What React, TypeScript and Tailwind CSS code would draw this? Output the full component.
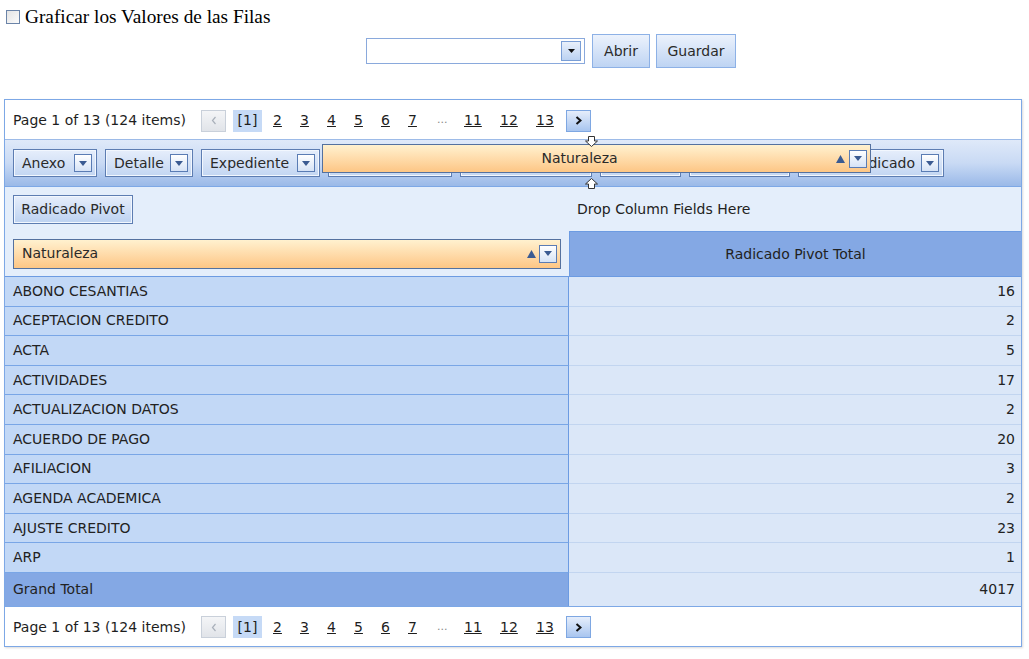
import React from "react";

const FONT = { fontFamily: '"DejaVu Sans", Verdana, sans-serif' };

function DropSq({ size = 18 }: { size?: number }) {
  return (
    <div
      className="flex items-center justify-center border border-[#5a7cb4] bg-gradient-to-b from-white to-[#d6e3f6] shrink-0"
      style={{ width: size, height: size }}
    >
      <svg width="8" height="5" viewBox="0 0 8 5">
        <polygon points="0,0 8,0 4,5" fill="#3b5b92" />
      </svg>
    </div>
  );
}

function SortUp() {
  return (
    <svg width="9" height="8" viewBox="0 0 9 8" className="shrink-0">
      <polygon points="4.5,0 9,8 0,8" fill="#3b5b92" />
    </svg>
  );
}

function FieldBtn({ label, w, hideText }: { label: string; w: number; hideText?: boolean }) {
  return (
    <div
      className="h-[28px] flex items-center justify-between pl-[8px] pr-[4px] border border-[#5d7db2] bg-gradient-to-b from-[#e6eefb] to-[#c3d6f2] shadow-[inset_0_0_0_1px_#f2f7fe] shrink-0"
      style={{ width: w }}
    >
      <span className={"text-[14px] text-[#2a2a2a] whitespace-nowrap " + (hideText ? "opacity-0" : "")}>{label}</span>
      <DropSq />
    </div>
  );
}

function Pager() {
  const nums = ["2", "3", "4", "5", "6", "7"];
  return (
    <div className="h-[39px] bg-white flex items-center pl-[8px] pt-[2px] text-[14px] text-[#1e1e1e]">
      <span className="whitespace-nowrap w-[188px] shrink-0">Page 1 of 13 (124 items)</span>
      <div className="w-[25px] h-[22px] border border-[#c9d0da] bg-gradient-to-b from-[#f4f5f7] to-[#e1e4e9] flex items-center justify-center shrink-0">
        <svg width="6" height="9" viewBox="0 0 6 9">
          <polyline points="4.5,1 1.5,4.5 4.5,8" fill="none" stroke="#a9b0ba" strokeWidth="1.2" />
        </svg>
      </div>
      <div className="ml-[7px] w-[29px] h-[22px] bg-[#c6daf6] flex items-center justify-center shrink-0">[1]</div>
      <div className="flex items-center ml-[11px]">
        {nums.map((n) => (
          <span key={n} className="w-[27px] shrink-0">
            <span className="underline">{n}</span>
          </span>
        ))}
      </div>
      <span className="ml-[2px] w-[27px] shrink-0 text-[#888] text-[11px]">...</span>
      <span className="w-[36px] shrink-0">
        <span className="underline">11</span>
      </span>
      <span className="w-[36px] shrink-0">
        <span className="underline">12</span>
      </span>
      <span className="w-[30px] shrink-0">
        <span className="underline">13</span>
      </span>
      <div className="w-[25px] h-[22px] border border-[#7ea7e2] bg-gradient-to-b from-[#e6eefb] to-[#a8c5ef] flex items-center justify-center shrink-0">
        <svg width="7" height="9" viewBox="0 0 7 9">
          <polyline points="1.5,1 5.5,4.5 1.5,8" fill="none" stroke="#111" strokeWidth="2" />
        </svg>
      </div>
    </div>
  );
}

const rows: [string, number][] = [
  ["ABONO CESANTIAS", 16],
  ["ACEPTACION CREDITO", 2],
  ["ACTA", 5],
  ["ACTIVIDADES", 17],
  ["ACTUALIZACION DATOS", 2],
  ["ACUERDO DE PAGO", 20],
  ["AFILIACION", 3],
  ["AGENDA ACADEMICA", 2],
  ["AJUSTE CREDITO", 23],
  ["ARP", 1],
];

export default function App() {
  return (
    <div className="w-[1029px] h-[659px] bg-white relative overflow-hidden" style={FONT}>
      {/* checkbox row */}
      <div className="h-[34px] flex items-center pl-[6px] pb-[1px]">
        <div className="w-[14px] h-[14px] border border-[#6b84a8] bg-gradient-to-br from-[#e4e4e4] to-[#fbfbfb]" />
        <span
          className="ml-[5px] text-[19.3px] leading-[20px] text-black"
          style={{ fontFamily: '"Liberation Serif", "Times New Roman", serif' }}
        >
          Graficar los Valores de las Filas
        </span>
      </div>

      {/* controls row */}
      <div className="h-[34px] flex items-center pl-[366px]">
        <div className="w-[219px] h-[26px] border border-[#8aa9dc] bg-white flex items-center justify-end pr-[3px]">
          <div className="w-[20px] h-[20px] border border-[#7a9ed6] bg-gradient-to-b from-[#e9f0fb] to-[#bcd2f2] flex items-center justify-center">
            <svg width="7" height="4" viewBox="0 0 7 4">
              <polygon points="0,0 7,0 3.5,4" fill="#111" />
            </svg>
          </div>
        </div>
        <div className="ml-[7px] w-[58px] h-[34px] border border-[#8db1e6] bg-gradient-to-b from-[#ecf2fc] to-[#bed4f3] flex items-center justify-center text-[14px] text-[#2a2a2a]">
          Abrir
        </div>
        <div className="ml-[6px] w-[80px] h-[34px] border border-[#8db1e6] bg-gradient-to-b from-[#ecf2fc] to-[#bed4f3] flex items-center justify-center text-[14px] text-[#2a2a2a]">
          Guardar
        </div>
      </div>

      {/* grid */}
      <div className="mt-[31px] ml-[4px] w-[1018px] border border-[#7da8e6] shadow-[1px_1px_2px_rgba(0,0,0,0.15)]">
        <Pager />

        {/* filter header zone */}
        <div className="relative h-[47px] border-t border-[#9dbbe8] bg-gradient-to-b from-[#dfe9f9] via-[#c9daf4] to-[#9ab9e8] flex items-center pl-[8px] gap-[8px]">
          <FieldBtn label="Anexo" w={84} />
          <FieldBtn label="Detalle" w={88} />
          <FieldBtn label="Expediente" w={119} />
          <FieldBtn label="Dependencia" w={124} hideText />
          <FieldBtn label="Estado" w={132} hideText />
          <FieldBtn label="Folios" w={81} hideText />
          <FieldBtn label="Fecha" w={101} hideText />
          <div className="h-[28px] w-[146px] flex items-center justify-end pr-[4px] border border-[#5d7db2] bg-gradient-to-b from-[#e6eefb] to-[#c3d6f2] shadow-[inset_0_0_0_1px_#f2f7fe] shrink-0">
            <span className="text-[14px] text-[#2a2a2a] whitespace-nowrap">Radicado</span>
            <div className="ml-[6px]">
              <DropSq />
            </div>
          </div>

          {/* dragged field overlay */}
          <div className="absolute left-[317px] top-[4px] w-[549px] h-[29px] border border-[#54719f] bg-gradient-to-b from-[#fff1cf] to-[#fdc685] flex items-center pr-[3px]">
            <span className="flex-1 text-center text-[14px] text-[#2a2a2a]">Naturaleza</span>
            <SortUp />
            <div className="ml-[4px]">
              <DropSq />
            </div>
          </div>

          {/* drop markers */}
          <svg className="absolute left-[580px] top-[-4px]" width="13" height="11" viewBox="0 0 13 11">
            <polygon points="3.5,0.5 9.5,0.5 9.5,5 12.5,5 6.5,10.5 0.5,5 3.5,5" fill="#fff" stroke="#333" strokeWidth="1" />
          </svg>
          <svg className="absolute left-[580px] top-[38px]" width="13" height="11" viewBox="0 0 13 11">
            <polygon points="6.5,0.5 12.5,6 9.5,6 9.5,10.5 3.5,10.5 3.5,6 0.5,6" fill="#fff" stroke="#333" strokeWidth="1" />
          </svg>
        </div>

        {/* pivot header area */}
        <div className="flex bg-[#e4eefb] border-t border-[#7da8e6]">
          <div className="w-[564px] shrink-0 flex flex-col">
            <div className="h-[44px] flex items-center pl-[8px]">
              <div className="h-[29px] w-[120px] border border-[#5d7db2] bg-gradient-to-b from-[#e6eefb] to-[#bdd2f1] shadow-[inset_0_0_0_1px_#f2f7fe] flex items-center justify-center text-[14px] text-[#2a2a2a]">
                Radicado Pivot
              </div>
            </div>
            <div className="h-[45px] flex items-center pl-[8px] pr-[8px]">
              <div className="h-[30px] flex-1 border border-[#54719f] bg-gradient-to-b from-[#fff1cf] to-[#fdc685] flex items-center pl-[8px] pr-[3px]">
                <span className="flex-1 text-[14px] text-[#2a2a2a]">Naturaleza</span>
                <SortUp />
                <div className="ml-[3px]">
                  <DropSq />
                </div>
              </div>
            </div>
          </div>
          <div className="flex-1 flex flex-col">
            <div className="h-[44px] flex items-center pl-[8px] text-[14px] text-[#222]">Drop Column Fields Here</div>
            <div className="h-[45px] bg-[#84a8e4] border-l border-t border-[#6c9be2] flex items-center justify-center text-[14px] text-[#222]">
              Radicado Pivot Total
            </div>
          </div>
        </div>

        {/* data rows */}
        <div className="border-t border-[#6c9be2]">
          {rows.map(([name, v]) => (
            <div key={name} className="flex h-[29.6px]">
              <div className="w-[564px] shrink-0 bg-[#c2d8f6] border-b border-[#79a6e6] border-r border-r-[#6c9be2] flex items-center pl-[8px] text-[14px] text-[#222]">
                {name}
              </div>
              <div className="flex-1 bg-[#dbe7f8] border-b border-[#c2d5f0] flex items-center justify-end pr-[6px] text-[14px] text-[#222]">
                {v}
              </div>
            </div>
          ))}
          <div className="flex h-[33px]">
            <div className="w-[564px] shrink-0 bg-[#84a8e4] border-r border-[#6c9be2] flex items-center pl-[8px] text-[14px] text-[#222]">
              Grand Total
            </div>
            <div className="flex-1 bg-[#dbe7f8] flex items-center justify-end pr-[6px] text-[14px] text-[#222]">4017</div>
          </div>
        </div>

        <div className="border-t border-[#7da8e6]">
          <Pager />
        </div>
      </div>
    </div>
  );
}
